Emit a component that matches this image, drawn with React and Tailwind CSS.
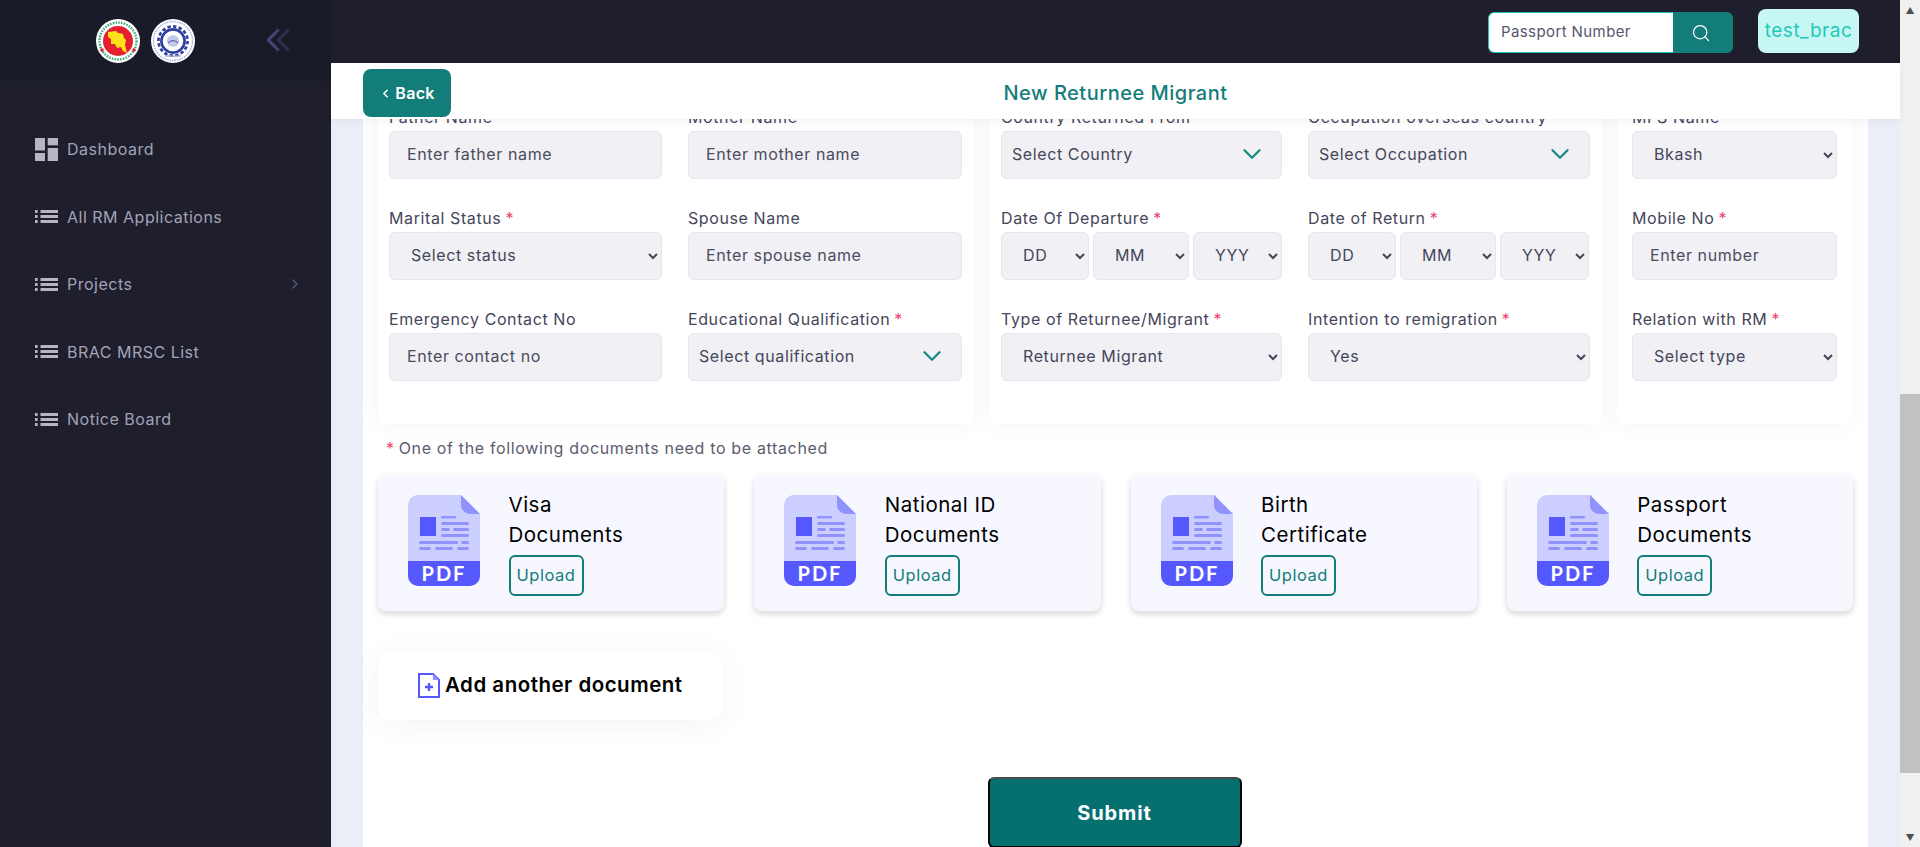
import { ChevronDown, ChevronLeft, ChevronRight, Search } from "lucide-react";

const inputClass =
  "h-[48px] w-full rounded-[6px] border border-[#e4e6ef] bg-[#f0f0f5] pb-[2px] pl-[17px] text-[16px] tracking-[0.6px] text-[#45465a] outline-none placeholder:text-[#4b4c5e]";
const selectClass =
  "h-[48px] w-full rounded-[6px] border border-[#e4e6ef] bg-[#f0f0f5] pb-[2px] pl-[17px] text-[16px] tracking-[0.6px] text-[#45465a] outline-none";

const NAV_ITEMS = ["All RM Applications", "Projects", "BRAC MRSC List", "Notice Board"];
const DOCS = [
  ["Visa", "Documents"],
  ["National ID", "Documents"],
  ["Birth", "Certificate"],
  ["Passport", "Documents"],
];

function BangladeshLogo() {
  return (
    <svg width="44" height="44" viewBox="0 0 44 44">
      <circle cx="22" cy="22" r="22" fill="#ffffff" />
      <circle cx="22" cy="22" r="18.5" fill="none" stroke="#3fa87a" strokeWidth="2.4" strokeDasharray="1.6 1.2" />
      <circle cx="22" cy="22" r="15" fill="#e5202e" />
      <path d="M12 13L20 12L22 14L27 15L28 19L30 21L29 26L31 34L27 32L25 28L21 29L19 25L15 25L15 20L12 18Z" fill="#ffe11a" />
      <circle cx="6" cy="31" r="1.8" fill="#e5202e" />
      <circle cx="38" cy="31" r="1.8" fill="#e5202e" />
    </svg>
  );
}

function MinistryLogo() {
  return (
    <svg width="44" height="44" viewBox="0 0 44 44">
      <circle cx="22" cy="22" r="22" fill="#ffffff" />
      <circle cx="22" cy="22" r="19.5" fill="none" stroke="#a5aad6" strokeWidth="1.4" strokeDasharray="1.5 1" />
      <circle cx="22" cy="22" r="14.6" fill="none" stroke="#2c3e9e" strokeWidth="2.6" strokeDasharray="3.4 2.3" />
      <circle cx="22" cy="22" r="11.6" fill="none" stroke="#2c3e9e" strokeWidth="2.6" />
      <circle cx="22" cy="22" r="6" fill="#c3c9e8" />
      <path d="M17 24c3-3 7-3 10 0" fill="none" stroke="#3a4aa5" strokeWidth="1" />
      <path d="M14 37h16" stroke="#a5aad6" strokeWidth="1.4" />
    </svg>
  );
}

function DashboardIcon() {
  return (
    <svg width="23" height="23" viewBox="0 0 23 23" fill="#b5b5c3" className="shrink-0">
      <rect x="0" y="0" width="10" height="12.5" />
      <rect x="12.7" y="0" width="10.3" height="7.3" />
      <rect x="0" y="15" width="10" height="8" />
      <rect x="12.7" y="10" width="10.3" height="13" />
    </svg>
  );
}

function ListIcon() {
  return (
    <svg width="23" height="23" viewBox="0 0 23 23" fill="#b5b5c3" className="shrink-0">
      <rect x="0" y="5" width="2.6" height="3" />
      <rect x="0" y="10" width="2.6" height="3" />
      <rect x="0" y="15" width="2.6" height="3" />
      <rect x="5.5" y="5" width="17.5" height="3" />
      <rect x="5.5" y="10" width="17.5" height="3" />
      <rect x="5.5" y="15" width="17.5" height="3" />
    </svg>
  );
}

function PdfIcon() {
  return (
    <svg width="72" height="91" viewBox="0 0 72 91" className="shrink-0">
      <path d="M10 0H53L72 19V66H0V10A10 10 0 0 1 10 0Z" fill="#ccceff" />
      <path d="M53 0L72 19H62A9 9 0 0 1 53 10Z" fill="#8f93fb" />
      <path d="M0 66H72V81A10 10 0 0 1 62 91H10A10 10 0 0 1 0 81Z" fill="#5558fd" />
      <rect x="12" y="22" width="16" height="19" fill="#5558fd" />
      <g fill="#8f93fb">
        <rect x="33" y="21" width="15" height="2.6" rx="1.3" />
        <rect x="33" y="27" width="28" height="3" rx="1.5" />
        <rect x="33" y="33" width="9" height="3" rx="1.5" />
        <rect x="45" y="33" width="16" height="3" rx="1.5" />
        <rect x="33" y="39" width="28" height="3" rx="1.5" />
        <rect x="11" y="46" width="39" height="3" rx="1.5" />
        <rect x="53" y="46" width="8" height="3" rx="1.5" />
        <rect x="11" y="52" width="12" height="3" rx="1.5" />
        <rect x="27" y="52" width="18" height="3" rx="1.5" />
        <rect x="49" y="52" width="12" height="3" rx="1.5" />
      </g>
      <text x="36" y="86" textAnchor="middle" fill="#ffffff" fontSize="20" fontWeight="700" letterSpacing="2" fontFamily="Lato, sans-serif">PDF</text>
    </svg>
  );
}

function AddDocIcon() {
  return (
    <svg width="22" height="25" viewBox="0 0 22 25" className="shrink-0">
      <path d="M1 1H15L21 7V24H1Z" fill="#ffffff" stroke="#5558fd" strokeWidth="2" />
      <path d="M15 1L21 7H15Z" fill="#8f93fb" />
      <path d="M11 10v8M7 14h8" stroke="#5558fd" strokeWidth="2.4" />
    </svg>
  );
}

function Label({ text, required }) {
  return (
    <label className="block h-[25px] text-[16px] leading-[22px] tracking-[0.6px] text-[#45465a] whitespace-nowrap">
      {text}
      {required && <span className="ml-1 text-[#f1416c]">*</span>}
    </label>
  );
}

function TextField({ label, required, placeholder }) {
  return (
    <div>
      <Label text={label} required={required} />
      <input className={inputClass} placeholder={placeholder} />
    </div>
  );
}

function SelectField({ label, required, value }) {
  return (
    <div>
      <Label text={label} required={required} />
      <select className={selectClass} defaultValue={value}>
        <option>{value}</option>
      </select>
    </div>
  );
}

function SearchSelect({ label, required, value }) {
  return (
    <div>
      <Label text={label} required={required} />
      <div className="flex h-[48px] items-center justify-between rounded-[6px] border border-[#e4e6ef] bg-[#f0f0f5] pb-[2px] pl-[10px] pr-[14px] text-[16px] tracking-[0.6px] text-[#45465a]">
        {value}
        <ChevronDown className="size-[30px] text-[#1a8a85]" strokeWidth={1.9} />
      </div>
    </div>
  );
}

function DateField({ label }) {
  return (
    <div>
      <Label text={label} required />
      <div className="grid grid-cols-[88px_96px_89px] gap-x-[4px]">
        <select className={selectClass}><option>DD</option></select>
        <select className={selectClass}><option>MM</option></select>
        <select className={selectClass}><option>YYY</option></select>
      </div>
    </div>
  );
}

function DocCard({ lines }) {
  return (
    <div className="flex h-[137px] rounded-[8px] bg-[#f7f8ff] pl-[30px] pt-[21px] shadow-[0_3px_6px_rgba(0,0,0,0.16)]">
      <PdfIcon />
      <div className="ml-[28.5px] -mt-[5px]">
        <div className="text-[20.5px] leading-[30px] tracking-[0.5px] text-black whitespace-nowrap">{lines[0]}</div>
        <div className="text-[20.5px] leading-[30px] tracking-[0.5px] text-black whitespace-nowrap">{lines[1]}</div>
        <button className="mt-[5px] h-[41px] w-[75px] rounded-[6px] border-2 border-[#137d7a] text-[16.5px] tracking-[0.5px] text-[#137d7a]">
          Upload
        </button>
      </div>
    </div>
  );
}

function Scrollbar() {
  return (
    <div className="flex w-[20px] shrink-0 flex-col items-center bg-[#f1f1f1]">
      <div className="flex h-[20px] items-center justify-center text-[9px] leading-none text-[#505050]">▲</div>
      <div className="h-[374px]" />
      <div className="h-[379px] w-full bg-[#c1c1c1]" />
      <div className="flex-1" />
      <div className="flex h-[20px] items-center justify-center text-[9px] leading-none text-[#505050]">▼</div>
    </div>
  );
}

export default function App() {
  return (
    <div className="flex h-[847px] w-full overflow-hidden bg-[#ebedf7] font-['Inter',sans-serif]">
      {/* sidebar */}
      <aside className="w-[331px] shrink-0 bg-[#1e1e2d]">
        <div className="flex h-[81px] items-start bg-[#1a1b28] pt-[19px]">
          <div className="ml-[96px] flex gap-[11px]">
            <BangladeshLogo />
            <MinistryLogo />
          </div>
          <div className="ml-[59px] mt-[2px] flex">
            <ChevronLeft className="size-[38px] text-[#43467a]" strokeWidth={2} />
            <ChevronLeft className="-ml-[28px] size-[38px] text-[#2e3050]" strokeWidth={2} />
          </div>
        </div>
        <nav className="pl-[35px] pr-[28px] pt-[34px]">
          <div className="flex h-[68px] items-center gap-[9px] text-[16px] tracking-[0.5px] text-[#a2a3b7]">
            <DashboardIcon />
            Dashboard
          </div>
          {NAV_ITEMS.map((item) => (
            <div key={item} className="flex h-[67.5px] items-center gap-[9px] text-[16px] tracking-[0.5px] text-[#a2a3b7]">
              <ListIcon />
              <span className="flex-1">{item}</span>
              {item === "Projects" && <ChevronRight className="size-[16px] text-[#5a5c7a]" />}
            </div>
          ))}
        </nav>
      </aside>

      <div className="flex min-w-0 flex-1 flex-col">
        {/* top bar */}
        <header className="flex h-[63px] shrink-0 items-start justify-end bg-[#1e1e2d] pr-[41px] pt-[9px]">
          <div className="mt-[3px] flex h-[41px] w-[245px] overflow-hidden rounded-[6px]">
            <div className="flex flex-1 items-center rounded-l-[6px] border border-r-0 border-[#17c5b5] bg-white pl-[12px] text-[15px] tracking-[0.4px] text-[#55566f]">
              Passport Number
            </div>
            <div className="flex w-[60px] items-center justify-center bg-[#137d7a]">
              <Search className="-ml-[5px] size-[20px] text-white" strokeWidth={1.5} />
            </div>
          </div>
          <div className="ml-[25px] flex h-[44px] w-[101px] items-center justify-center rounded-[8px] bg-[#c7f7f3] text-[19px] tracking-[0.5px] text-[#1fc9b8]">
            test_brac
          </div>
        </header>

        {/* page title */}
        <div className="relative z-10 grid h-[56px] shrink-0 grid-cols-[1fr_auto_1fr] items-center bg-white px-[32px] pt-[4px] shadow-[0_2px_8px_rgba(30,30,60,0.06)]">
          <div>
            <button className="flex h-[48px] w-[88px] items-center justify-center gap-[3px] rounded-[8px] bg-[#137d7a] text-[16px] font-semibold tracking-[0.3px] text-white">
              <ChevronLeft className="size-[13px]" strokeWidth={3} />
              Back
            </button>
          </div>
          <h1 className="text-[20px] font-medium tracking-[0.5px] text-[#137d7a]">New Returnee Migrant</h1>
          <div />
        </div>

        {/* form, scrolled so the first labels sit under the title bar */}
        <div className="flex min-h-0 flex-1 overflow-hidden px-[32px]">
          <div className="flex-1 bg-white pl-[15px] pr-[15px]">
            <div className="-mt-[13px] flex items-start gap-x-[16px]">
              <section className="w-[595px] rounded-b-[8px] bg-white pb-[43px] pl-[11px] pr-[11px] shadow-[0_0_20px_rgba(76,87,125,0.06)]">
                <div className="grid grid-cols-[273px_274px] gap-x-[26px] gap-y-[28px]">
                  <TextField label="Father Name" placeholder="Enter father name" />
                  <TextField label="Mother Name" placeholder="Enter mother name" />
                  <SelectField label="Marital Status" required value="Select status" />
                  <TextField label="Spouse Name" placeholder="Enter spouse name" />
                  <TextField label="Emergency Contact No" placeholder="Enter contact no" />
                  <SearchSelect label="Educational Qualification" required value="Select qualification" />
                </div>
              </section>
              <section className="w-[613px] rounded-b-[8px] bg-white pb-[43px] pl-[12px] pr-[12px] shadow-[0_0_20px_rgba(76,87,125,0.06)]">
                <div className="grid grid-cols-[281px_282px] gap-x-[26px] gap-y-[28px]">
                  <SearchSelect label="Country Returned From" value="Select Country" />
                  <SearchSelect label="Occupation overseas country" value="Select Occupation" />
                  <DateField label="Date Of Departure" />
                  <DateField label="Date of Return" />
                  <SelectField label="Type of Returnee/Migrant" required value="Returnee Migrant" />
                  <SelectField label="Intention to remigration" required value="Yes" />
                </div>
              </section>
              <section className="-ml-[1px] w-[235px] rounded-b-[8px] bg-white pb-[43px] pl-[15px] pr-[15px] shadow-[0_0_20px_rgba(76,87,125,0.06)]">
                <div className="grid grid-cols-1 gap-y-[28px]">
                  <SelectField label="MFS Name" value="Bkash" />
                  <TextField label="Mobile No" required placeholder="Enter number" />
                  <SelectField label="Relation with RM" required value="Select type" />
                </div>
              </section>
            </div>

            <p className="mt-[12px] h-[24px] pl-[8px] text-[16px] leading-[24px] tracking-[0.65px] text-[#5b5c6e]">
              <span className="mr-1 text-[#f1416c]">*</span>
              One of the following documents need to be attached
            </p>

            <div className="mt-[14px] grid grid-cols-4 gap-x-[30px]">
              {DOCS.map((lines) => (
                <DocCard key={lines[0]} lines={lines} />
              ))}
            </div>

            <div className="mt-[40px] flex h-[69px] w-[345px] items-center gap-[5px] rounded-[12px] bg-white pl-[40px] shadow-[0_4px_30px_rgba(76,87,125,0.06)]">
              <AddDocIcon />
              <span className="text-[20.5px] font-semibold tracking-[0.5px] text-black whitespace-nowrap">Add another document</span>
            </div>

            <div className="mt-[57px] flex justify-center pr-[2px]">
              <button className="h-[71px] w-[254px] rounded-[6px] border-2 border-black border-t-[#4a4a4a] bg-[#067070] text-[20px] font-bold tracking-[0.9px] text-white">
                Submit
              </button>
            </div>
          </div>
        </div>
      </div>

      <Scrollbar />
    </div>
  );
}
